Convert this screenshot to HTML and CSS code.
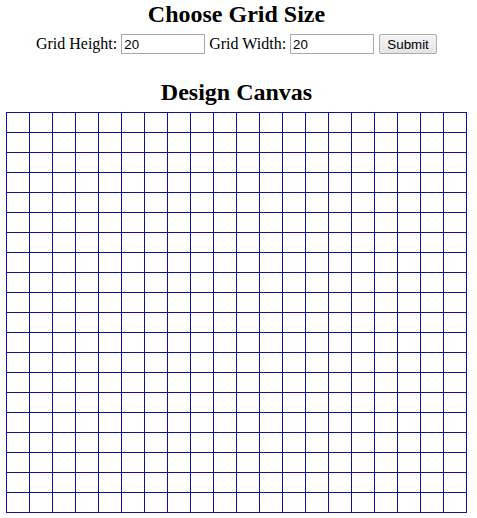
FILE: index.html
```html
<!DOCTYPE html>
<html>
<head>
<meta charset="utf-8">
<title>Pixel Art Maker</title>
<link rel="stylesheet" href="styles.css">
</head>
<body>
<h2 class="title">Choose Grid Size</h2>
<form class="size-form">
  <label class="field">Grid Height: <input class="num" type="text" value="20"></label>
  <label class="field">Grid Width: <input class="num" type="text" value="20"></label>
  <button class="submit" type="button">Submit</button>
</form>
<h2 class="title canvas-title">Design Canvas</h2>
<div class="canvas">
<div class="cell"></div><div class="cell"></div><div class="cell"></div><div class="cell"></div><div class="cell"></div><div class="cell"></div><div class="cell"></div><div class="cell"></div><div class="cell"></div><div class="cell"></div><div class="cell"></div><div class="cell"></div><div class="cell"></div><div class="cell"></div><div class="cell"></div><div class="cell"></div><div class="cell"></div><div class="cell"></div><div class="cell"></div><div class="cell"></div>
<div class="cell"></div><div class="cell"></div><div class="cell"></div><div class="cell"></div><div class="cell"></div><div class="cell"></div><div class="cell"></div><div class="cell"></div><div class="cell"></div><div class="cell"></div><div class="cell"></div><div class="cell"></div><div class="cell"></div><div class="cell"></div><div class="cell"></div><div class="cell"></div><div class="cell"></div><div class="cell"></div><div class="cell"></div><div class="cell"></div>
<div class="cell"></div><div class="cell"></div><div class="cell"></div><div class="cell"></div><div class="cell"></div><div class="cell"></div><div class="cell"></div><div class="cell"></div><div class="cell"></div><div class="cell"></div><div class="cell"></div><div class="cell"></div><div class="cell"></div><div class="cell"></div><div class="cell"></div><div class="cell"></div><div class="cell"></div><div class="cell"></div><div class="cell"></div><div class="cell"></div>
<div class="cell"></div><div class="cell"></div><div class="cell"></div><div class="cell"></div><div class="cell"></div><div class="cell"></div><div class="cell"></div><div class="cell"></div><div class="cell"></div><div class="cell"></div><div class="cell"></div><div class="cell"></div><div class="cell"></div><div class="cell"></div><div class="cell"></div><div class="cell"></div><div class="cell"></div><div class="cell"></div><div class="cell"></div><div class="cell"></div>
<div class="cell"></div><div class="cell"></div><div class="cell"></div><div class="cell"></div><div class="cell"></div><div class="cell"></div><div class="cell"></div><div class="cell"></div><div class="cell"></div><div class="cell"></div><div class="cell"></div><div class="cell"></div><div class="cell"></div><div class="cell"></div><div class="cell"></div><div class="cell"></div><div class="cell"></div><div class="cell"></div><div class="cell"></div><div class="cell"></div>
<div class="cell"></div><div class="cell"></div><div class="cell"></div><div class="cell"></div><div class="cell"></div><div class="cell"></div><div class="cell"></div><div class="cell"></div><div class="cell"></div><div class="cell"></div><div class="cell"></div><div class="cell"></div><div class="cell"></div><div class="cell"></div><div class="cell"></div><div class="cell"></div><div class="cell"></div><div class="cell"></div><div class="cell"></div><div class="cell"></div>
<div class="cell"></div><div class="cell"></div><div class="cell"></div><div class="cell"></div><div class="cell"></div><div class="cell"></div><div class="cell"></div><div class="cell"></div><div class="cell"></div><div class="cell"></div><div class="cell"></div><div class="cell"></div><div class="cell"></div><div class="cell"></div><div class="cell"></div><div class="cell"></div><div class="cell"></div><div class="cell"></div><div class="cell"></div><div class="cell"></div>
<div class="cell"></div><div class="cell"></div><div class="cell"></div><div class="cell"></div><div class="cell"></div><div class="cell"></div><div class="cell"></div><div class="cell"></div><div class="cell"></div><div class="cell"></div><div class="cell"></div><div class="cell"></div><div class="cell"></div><div class="cell"></div><div class="cell"></div><div class="cell"></div><div class="cell"></div><div class="cell"></div><div class="cell"></div><div class="cell"></div>
<div class="cell"></div><div class="cell"></div><div class="cell"></div><div class="cell"></div><div class="cell"></div><div class="cell"></div><div class="cell"></div><div class="cell"></div><div class="cell"></div><div class="cell"></div><div class="cell"></div><div class="cell"></div><div class="cell"></div><div class="cell"></div><div class="cell"></div><div class="cell"></div><div class="cell"></div><div class="cell"></div><div class="cell"></div><div class="cell"></div>
<div class="cell"></div><div class="cell"></div><div class="cell"></div><div class="cell"></div><div class="cell"></div><div class="cell"></div><div class="cell"></div><div class="cell"></div><div class="cell"></div><div class="cell"></div><div class="cell"></div><div class="cell"></div><div class="cell"></div><div class="cell"></div><div class="cell"></div><div class="cell"></div><div class="cell"></div><div class="cell"></div><div class="cell"></div><div class="cell"></div>
<div class="cell"></div><div class="cell"></div><div class="cell"></div><div class="cell"></div><div class="cell"></div><div class="cell"></div><div class="cell"></div><div class="cell"></div><div class="cell"></div><div class="cell"></div><div class="cell"></div><div class="cell"></div><div class="cell"></div><div class="cell"></div><div class="cell"></div><div class="cell"></div><div class="cell"></div><div class="cell"></div><div class="cell"></div><div class="cell"></div>
<div class="cell"></div><div class="cell"></div><div class="cell"></div><div class="cell"></div><div class="cell"></div><div class="cell"></div><div class="cell"></div><div class="cell"></div><div class="cell"></div><div class="cell"></div><div class="cell"></div><div class="cell"></div><div class="cell"></div><div class="cell"></div><div class="cell"></div><div class="cell"></div><div class="cell"></div><div class="cell"></div><div class="cell"></div><div class="cell"></div>
<div class="cell"></div><div class="cell"></div><div class="cell"></div><div class="cell"></div><div class="cell"></div><div class="cell"></div><div class="cell"></div><div class="cell"></div><div class="cell"></div><div class="cell"></div><div class="cell"></div><div class="cell"></div><div class="cell"></div><div class="cell"></div><div class="cell"></div><div class="cell"></div><div class="cell"></div><div class="cell"></div><div class="cell"></div><div class="cell"></div>
<div class="cell"></div><div class="cell"></div><div class="cell"></div><div class="cell"></div><div class="cell"></div><div class="cell"></div><div class="cell"></div><div class="cell"></div><div class="cell"></div><div class="cell"></div><div class="cell"></div><div class="cell"></div><div class="cell"></div><div class="cell"></div><div class="cell"></div><div class="cell"></div><div class="cell"></div><div class="cell"></div><div class="cell"></div><div class="cell"></div>
<div class="cell"></div><div class="cell"></div><div class="cell"></div><div class="cell"></div><div class="cell"></div><div class="cell"></div><div class="cell"></div><div class="cell"></div><div class="cell"></div><div class="cell"></div><div class="cell"></div><div class="cell"></div><div class="cell"></div><div class="cell"></div><div class="cell"></div><div class="cell"></div><div class="cell"></div><div class="cell"></div><div class="cell"></div><div class="cell"></div>
<div class="cell"></div><div class="cell"></div><div class="cell"></div><div class="cell"></div><div class="cell"></div><div class="cell"></div><div class="cell"></div><div class="cell"></div><div class="cell"></div><div class="cell"></div><div class="cell"></div><div class="cell"></div><div class="cell"></div><div class="cell"></div><div class="cell"></div><div class="cell"></div><div class="cell"></div><div class="cell"></div><div class="cell"></div><div class="cell"></div>
<div class="cell"></div><div class="cell"></div><div class="cell"></div><div class="cell"></div><div class="cell"></div><div class="cell"></div><div class="cell"></div><div class="cell"></div><div class="cell"></div><div class="cell"></div><div class="cell"></div><div class="cell"></div><div class="cell"></div><div class="cell"></div><div class="cell"></div><div class="cell"></div><div class="cell"></div><div class="cell"></div><div class="cell"></div><div class="cell"></div>
<div class="cell"></div><div class="cell"></div><div class="cell"></div><div class="cell"></div><div class="cell"></div><div class="cell"></div><div class="cell"></div><div class="cell"></div><div class="cell"></div><div class="cell"></div><div class="cell"></div><div class="cell"></div><div class="cell"></div><div class="cell"></div><div class="cell"></div><div class="cell"></div><div class="cell"></div><div class="cell"></div><div class="cell"></div><div class="cell"></div>
<div class="cell"></div><div class="cell"></div><div class="cell"></div><div class="cell"></div><div class="cell"></div><div class="cell"></div><div class="cell"></div><div class="cell"></div><div class="cell"></div><div class="cell"></div><div class="cell"></div><div class="cell"></div><div class="cell"></div><div class="cell"></div><div class="cell"></div><div class="cell"></div><div class="cell"></div><div class="cell"></div><div class="cell"></div><div class="cell"></div>
<div class="cell"></div><div class="cell"></div><div class="cell"></div><div class="cell"></div><div class="cell"></div><div class="cell"></div><div class="cell"></div><div class="cell"></div><div class="cell"></div><div class="cell"></div><div class="cell"></div><div class="cell"></div><div class="cell"></div><div class="cell"></div><div class="cell"></div><div class="cell"></div><div class="cell"></div><div class="cell"></div><div class="cell"></div><div class="cell"></div>
</div>
</body>
</html>
```
FILE: styles.css
```css
html {
  background: #ffffff;
}

body {
  margin: 0 0 0 6px;
  width: 461px;
  font-family: "Liberation Serif", "Times New Roman", serif;
  font-size: 16px;
  color: #000000;
  text-align: center;
}

.title {
  margin: 0;
  font-size: 24px;
  font-weight: bold;
  line-height: 28px;
}

.canvas-title {
  margin: 22px 0 6px;
}

.size-form {
  margin: 4px 0 0;
  height: 24px;
  display: flex;
  justify-content: center;
  align-items: center;
  gap: 4px;
}

.field {
  display: flex;
  align-items: center;
  gap: 4px;
  white-space: nowrap;
  line-height: 18px;
}

.num {
  box-sizing: border-box;
  width: 84px;
  height: 20px;
  margin: 0;
  padding: 0 2px;
  border: 1px solid #a9a9a9;
  font-family: "Liberation Sans", Arial, sans-serif;
  font-size: 13.33px;
  color: #000000;
  background: #ffffff;
}

.submit {
  box-sizing: border-box;
  width: 58px;
  height: 20px;
  margin: 0 0 0 1px;
  padding: 0;
  border: 1px solid #adadad;
  border-radius: 2px;
  background: linear-gradient(#f6f6f6, #e3e3e3);
  font-family: "Liberation Sans", Arial, sans-serif;
  font-size: 13.33px;
  color: #000000;
}

.canvas {
  display: grid;
  grid-template-columns: repeat(20, 22px);
  grid-auto-rows: 19px;
  gap: 1px;
  padding: 1px;
  width: max-content;
  background: #10109f;
}

.cell {
  background: #ffffff;
}
```
